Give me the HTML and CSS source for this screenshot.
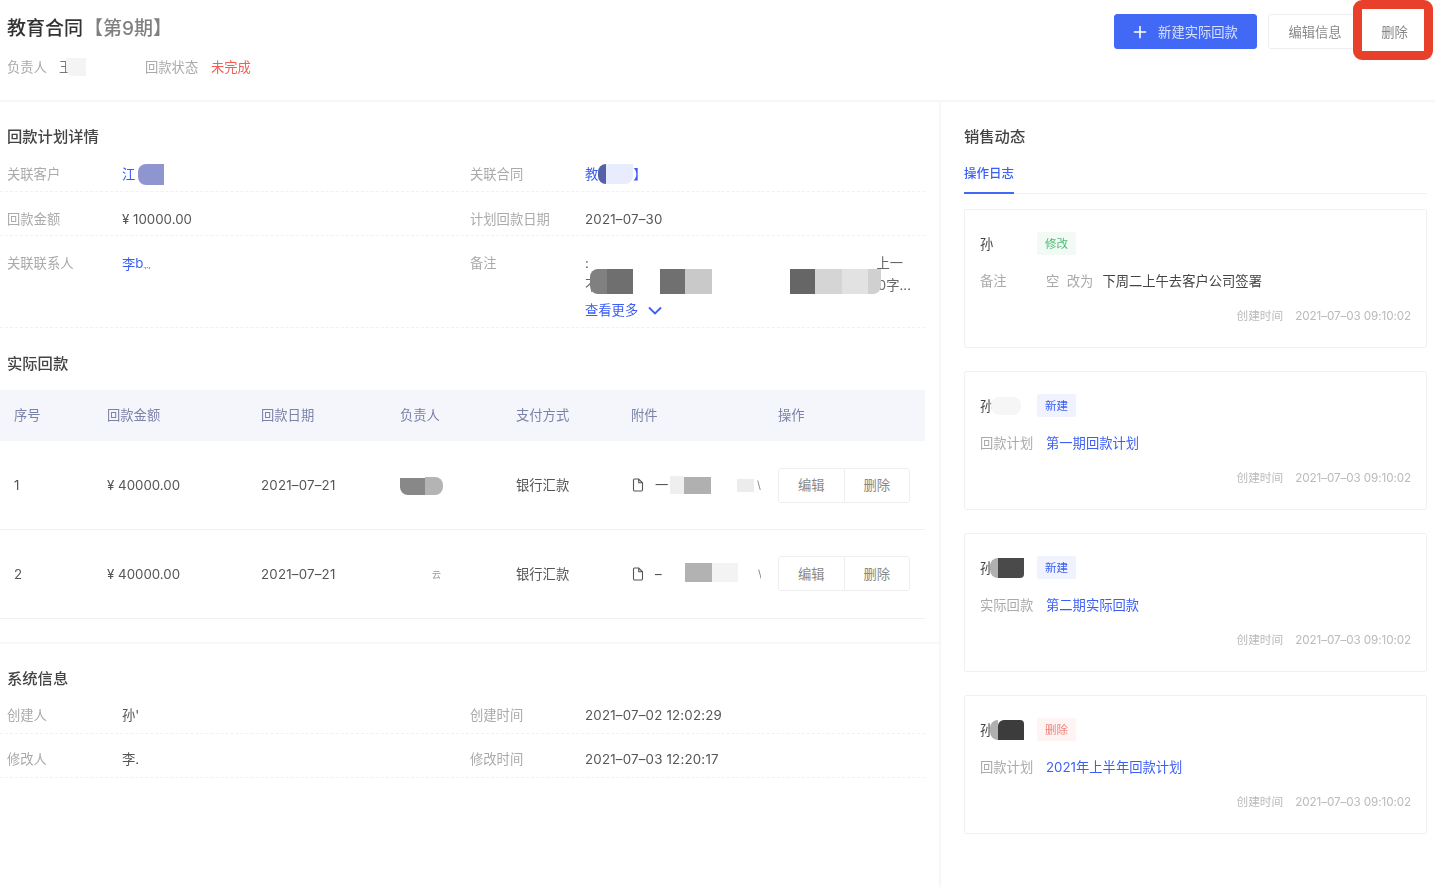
FILE: index.html
```html
<!DOCTYPE html>
<html lang="zh-CN">
<head>
<meta charset="utf-8">
<title>教育合同</title>
<link rel="stylesheet" href="styles.css">
</head>
<body>
<div class="page">
  <header class="top">
    <div class="top-left">
      <h1 class="title">教育合同<span class="title-sub">【第9期】</span></h1>
      <div class="meta">
        <span class="label meta-owner">负责人</span>
        <span class="meta-name">王<i class="mask mask-owner"></i></span>
        <span class="label meta-status">回款状态</span>
        <span class="status-red">未完成</span>
      </div>
    </div>
    <div class="actions">
      <button class="btn btn-primary"><svg class="plus" viewBox="0 0 16 16"><path d="M8 1v14M1 8h14"/></svg>新建实际回款</button>
      <button class="btn btn-edit">编辑信息</button>
      <button class="btn btn-delete">删除</button>
    </div>
    <div class="highlight"></div>
  </header>

  <div class="content">
    <main class="left">
      <h2 class="section-title first">回款计划详情</h2>
      <div class="info-row">
        <span class="label">关联客户</span>
        <span class="link">江<i class="mask mask-customer"></i></span>
        <span class="label">关联合同</span>
        <span class="link">教<i class="mask mask-c1"></i><i class="mask mask-c2"></i>】</span>
      </div>
      <div class="info-row info-low">
        <span class="label">回款金额</span>
        <span class="value">¥ 10000.00</span>
        <span class="label">计划回款日期</span>
        <span class="value date">2021–07–30</span>
      </div>
      <div class="info-row info-low info-notes">
        <span class="label">关联联系人</span>
        <span class="link">李<span class="frag">b<small>.,.,</small></span></span>
        <span class="label">备注</span>
        <div class="notes">
          <div class="note-line note-first"><span>:</span><span>上一</span></div>
          <div class="note-line"><span>不</span><span>0字...</span></div>
          <a class="more">查看更多<svg class="chev" viewBox="0 0 14 9"><path d="M1 1.5l6 6 6-6"/></svg></a>
          <i class="blot b1"></i><i class="blot b2"></i><i class="blot b3"></i><i class="blot b4"></i><i class="blot b5"></i><i class="blot b6"></i><i class="blot b7"></i><i class="blot b8"></i>
        </div>
      </div>

      <h2 class="section-title second">实际回款</h2>
      <table class="table">
        <colgroup>
          <col class="c1"><col class="c2"><col class="c3"><col class="c4"><col class="c5"><col class="c6"><col class="c7">
        </colgroup>
        <thead>
          <tr><th>序号</th><th>回款金额</th><th>回款日期</th><th>负责人</th><th>支付方式</th><th>附件</th><th class="op">操作</th></tr>
        </thead>
        <tbody>
          <tr>
            <td>1</td><td>¥ 40000.00</td><td class="date">2021–07–21</td>
            <td><i class="mask mask-p1"></i><i class="mask mask-p2"></i></td>
            <td>银行汇款</td>
            <td><div class="file"><svg class="doc" viewBox="0 0 12 14"><path d="M1.5 2.2c0-.7.4-1.2 1-1.2h4.200l3.800 3.800v7c0 .6-.4 1.200-1 1.200h-7c-.6 0-1-.5-1-1.200zM6.700 1v3.800h3.800"/></svg><span class="file-name">一</span><i class="mask f1"></i><i class="mask f2"></i><i class="mask f3"></i><span class="file-end">\</span></div></td>
            <td class="op"><div class="group"><button>编辑</button><button>删除</button></div></td>
          </tr>
          <tr>
            <td>2</td><td>¥ 40000.00</td><td class="date">2021–07–21</td>
            <td><span class="p2-end">云</span></td>
            <td>银行汇款</td>
            <td><div class="file"><svg class="doc" viewBox="0 0 12 14"><path d="M1.5 2.2c0-.7.4-1.2 1-1.2h4.200l3.800 3.800v7c0 .6-.4 1.200-1 1.200h-7c-.6 0-1-.5-1-1.200zM6.700 1v3.800h3.800"/></svg><span class="file-name">–</span><i class="mask f4"></i><i class="mask f5"></i><span class="file-end">\</span></div></td>
            <td class="op"><div class="group"><button>编辑</button><button>删除</button></div></td>
          </tr>
        </tbody>
      </table>

      <div class="divider"></div>
      <h2 class="section-title">系统信息</h2>
      <div class="info-row info-tight">
        <span class="label">创建人</span>
        <span class="value">孙'</span>
        <span class="label">创建时间</span>
        <span class="value date">2021–07–02 12:02:29</span>
      </div>
      <div class="info-row info-tight">
        <span class="label">修改人</span>
        <span class="value">李.</span>
        <span class="label">修改时间</span>
        <span class="value date">2021–07–03 12:20:17</span>
      </div>
    </main>

    <aside class="right">
      <h2 class="section-title first">销售动态</h2>
      <div class="tabs"><span class="tab">操作日志</span></div>
      <div class="cards">
        <article class="card">
          <div class="card-head"><span class="who">孙</span><span class="tag tag-green">修改</span></div>
          <div class="card-row"><span class="label card-label">备注</span><span class="label">空&nbsp; 改为</span><span class="strong">下周二上午去客户公司签署</span></div>
          <div class="card-foot"><span>创建时间</span><span class="time">2021–07–03 09:10:02</span></div>
        </article>
        <article class="card">
          <div class="card-head"><span class="who">孙<i class="mask w-light"></i></span><span class="tag tag-blue">新建</span></div>
          <div class="card-row"><span class="label card-label">回款计划</span><span class="link">第一期回款计划</span></div>
          <div class="card-foot"><span>创建时间</span><span class="time">2021–07–03 09:10:02</span></div>
        </article>
        <article class="card">
          <div class="card-head"><span class="who">孙<i class="mask w-gray"></i><i class="mask w-dark"></i></span><span class="tag tag-blue">新建</span></div>
          <div class="card-row"><span class="label card-label">实际回款</span><span class="link">第二期实际回款</span></div>
          <div class="card-foot"><span>创建时间</span><span class="time">2021–07–03 09:10:02</span></div>
        </article>
        <article class="card">
          <div class="card-head"><span class="who">孙<i class="mask w-gray"></i><i class="mask w-dark w-darker"></i></span><span class="tag tag-red">删除</span></div>
          <div class="card-row"><span class="label card-label">回款计划</span><span class="link">2021年上半年回款计划</span></div>
          <div class="card-foot"><span>创建时间</span><span class="time">2021–07–03 09:10:02</span></div>
        </article>
      </div>
    </aside>
  </div>
</div>
</body>
</html>
```
FILE: styles.css
```css
* { box-sizing: border-box; }
html, body { margin: 0; padding: 0; background: #fff; }
body {
  font-family: Inter, "Noto Sans CJK SC", "Liberation Sans", sans-serif;
  font-size: 13.3px;
  line-height: 22px;
  color: #555;
}
i { font-style: normal; }
.page {
  width: 1435px;
  height: 887px;
  overflow: hidden;
  display: flex;
  flex-direction: column;
  filter: blur(0.35px);
}
.top {
  position: relative;
  flex: none;
  height: 102px;
  display: flex;
  justify-content: space-between;
  border-bottom: 2px solid #f6f6f6;
}
.top-left { padding: 15px 0 0 7px; }
.title {
  margin: 0;
  font-size: 19px;
  line-height: 28px;
  font-weight: 500;
  color: #333;
}
.title-sub { color: #808080; font-weight: 500; margin-left: 1px; }
.meta { display: flex; align-items: center; margin-top: 13px; }
.label { color: #aaa; white-space: nowrap; }
.meta-owner { width: 52px; }
.meta-name {
  width: 86px;
  display: flex;
  align-items: center;
  overflow: hidden;
  color: #777;
}
.mask-owner { width: 20px; height: 18px; margin-left: -6px; background: #f4f4f4; border-radius: 0 0 0 8px; }
.meta-status { width: 66px; }
.status-red { color: #ef5f58; }
.actions { display: flex; padding: 14px 8px 0 0; align-items: flex-start; }
.btn {
  height: 35px;
  font: inherit;
  border-radius: 3px;
  border: 1px solid #eee;
  background: #fff;
  color: #888;
  display: flex;
  align-items: center;
  justify-content: center;
  white-space: nowrap;
  padding: 0;
}
.btn-primary {
  width: 143px;
  margin-right: 11px;
  background: #4169f6;
  border-color: #4169f6;
  color: #d6e0ff;
}
.plus { width: 14px; height: 14px; margin-right: 11px; fill: none; stroke: #fff; stroke-width: 1.8; }
.btn-edit { width: 94px; }
.btn-delete { width: 65px; border-color: transparent; }
.highlight {
  position: absolute;
  left: 1353px;
  top: 0;
  width: 80px;
  height: 60px;
  border: 9px solid #e8402a;
  border-radius: 9px;
}

.content { flex: 1; display: flex; min-height: 0; }
.left { width: 939px; flex: none; }
.right {
  flex: 1;
  border-left: 2px solid #f7f7f7;
  padding-left: 23px;
  padding-right: 8px;
}
.section-title {
  margin: 0;
  font-size: 15.3px;
  line-height: 22px;
  font-weight: 500;
  color: #444;
  padding-left: 7px;
}
.right .section-title { padding-left: 0; }
.section-title.first { margin-top: 24px; }
.section-title.second { margin-top: 25px; }

.info-row {
  width: 925px;
  height: 44px;
  padding: 15px 0 0 7px;
  display: grid;
  grid-template-columns: 115px 348px 115px 1fr;
  align-items: start;
  border-bottom: 1px dashed #f1f1f1;
}
.info-low { padding-top: 16px; }
.info-tight { padding-top: 14px; }
.info-notes { height: 92px; }
.link { color: #3b5ef5; display: inline-flex; align-items: center; white-space: nowrap; }
.value { color: #555; }
.date { letter-spacing: 0.2px; }

.mask { display: inline-block; flex: none; }
.mask-customer { width: 26px; height: 21px; margin-left: 3px; background: #8f96cf; border-radius: 8px 0 0 8px; }
.mask-c1 { width: 8px; height: 20px; background: #5560ab; border-radius: 8px 0 0 8px; }
.mask-c2 { width: 27px; height: 20px; background: #e8ecfd; border-radius: 0 0 8px 0; }
.frag { letter-spacing: -0.5px; }
.frag small { font-size: 8px; }

.notes { position: relative; width: 326px; }
.note-line { display: flex; justify-content: space-between; color: #666; }
.note-first { padding-right: 8px; }
.more { display: flex; align-items: center; color: #3b5ef5; margin-top: 3px; }
.chev { width: 14px; height: 9px; margin-left: 10px; fill: none; stroke: #3b5ef5; stroke-width: 1.800; }
.blot { position: absolute; top: 17px; height: 25px; }
.b1 { left: 5px; width: 17px; background: #808080; border-radius: 8px 0 0 8px; }
.b2 { left: 22px; width: 26px; background: #6f6f6f; }
.b3 { left: 75px; width: 25px; background: #707070; }
.b4 { left: 100px; width: 27px; background: #c9c9c9; }
.b5 { left: 205px; width: 25px; background: #666; }
.b6 { left: 230px; width: 27px; background: #d5d5d5; }
.b7 { left: 257px; width: 26px; background: #e2e2e2; }
.b8 { left: 283px; width: 13px; background: #d0d0d0; border-radius: 0 0 8px 0; }

.table {
  width: 925px;
  margin-top: 15px;
  border-collapse: collapse;
  table-layout: fixed;
}
.c1 { width: 107px; }
.c2 { width: 154px; }
.c3 { width: 139px; }
.c4 { width: 116px; }
.c5 { width: 115px; }
.c6 { width: 130px; }
.c7 { width: 164px; }
.table th {
  height: 51px;
  padding: 0 0 2px;
  text-align: left;
  font-weight: 400;
  color: #7b82a8;
  background: #f5f6fb;
}
.table td {
  height: 88.5px;
  padding: 0;
  color: #555;
  border-bottom: 1px solid #f2f2f2;
}
.table th:first-child, .table td:first-child { padding-left: 14px; }
.table .op {
  position: relative;
  padding-left: 17px;
  box-shadow: -8px 0 8px -6px rgba(0, 0, 0, 0.05);
}
.mask-p1 { width: 25px; height: 17px; background: #888; border-radius: 0 0 0 8px; vertical-align: middle; }
.mask-p2 { width: 18px; height: 18px; background: #b4b4b4; border-radius: 0 8px 8px 0; vertical-align: middle; }
.p2-end { margin-left: 32px; color: #999; font-size: 9px; }
.file { display: flex; align-items: center; width: 130px; overflow: hidden; color: #555; }
.doc { width: 12px; height: 14px; margin-left: 1px; fill: none; stroke: #555; stroke-width: 1.1; flex: none; }
.file-name { width: 15px; margin-left: 11px; flex: none; }
.f1 { width: 14px; height: 18px; background: #efefef; }
.f2 { width: 27px; height: 17px; background: #b0b0b0; }
.f3 { width: 17px; height: 13px; background: #ececec; margin-left: 26px; }
.f4 { width: 27px; height: 24px; background: #b2b2b2; margin: -8px 0 0 15px; }
.f5 { width: 26px; height: 24px; background: #f3f3f3; margin-top: -8px; }
.file-end { margin-left: 3px; color: #888; font-size: 11px; }
.f4 ~ .file-end { margin-left: 20px; }
.group {
  display: flex;
  width: 132px;
  height: 35px;
  border: 1px solid #eee;
  border-radius: 3px;
  overflow: hidden;
}
.group button {
  flex: 1;
  border: 0;
  background: #fff;
  font: inherit;
  color: #888;
  padding: 0;
}
.group button + button { border-left: 1px solid #eee; }

.divider { height: 2px; margin: 23px 0 24px; background: #f7f7f7; }

.tabs { margin-top: 14px; border-bottom: 1px solid #f1f1f1; height: 32px; }
.tab {
  display: inline-block;
  height: 31px;
  color: #3b5ef5;
  font-size: 12.500px;
  font-weight: 500;
  border-bottom: 2px solid #4169f6;
}
.cards { margin-top: 15px; display: flex; flex-direction: column; gap: 23px; }
.card {
  height: 139px;
  border: 1px solid #f1f1f1;
  border-radius: 2px;
  padding: 22px 15px 0;
}
.card-head { display: flex; align-items: center; height: 23px; }
.who {
  width: 57px;
  display: flex;
  align-items: center;
  font-size: 13.300px;
  color: #444;
}
.tag {
  width: 39px;
  height: 23px;
  border-radius: 2px;
  font-size: 11.500px;
  text-align: center;
  line-height: 24px;
}
.tag-green { background: #f3faf5; color: #4cbb73; }
.tag-blue { background: #f0f3fe; color: #3b5ef5; }
.tag-red { background: #fdf4f3; color: #f0807a; }
.w-light { width: 30px; height: 18px; background: #f6f6f6; margin-left: -2px; border-radius: 8px; }
.w-gray { width: 8px; height: 20px; background: #b0b0b0; margin-left: -3px; border-radius: 8px 0 0 8px; }
.w-dark { width: 26px; height: 20px; background: #4a4a4a; border-radius: 0 0 4px 0; }
.w-darker { background: #3c3c3c; border-radius: 6px 4px 0 0; }
.card-row { display: flex; margin-top: 15px; }
.card-label { width: 66px; flex: none; }
.card-row .label + .label { margin-right: 9px; }
.strong { color: #444; }
.card-foot {
  margin-top: 13px;
  display: flex;
  justify-content: flex-end;
  gap: 12px;
  font-size: 11.700px;
  color: #bbb;
}
.time { letter-spacing: -0.1px; }
```
